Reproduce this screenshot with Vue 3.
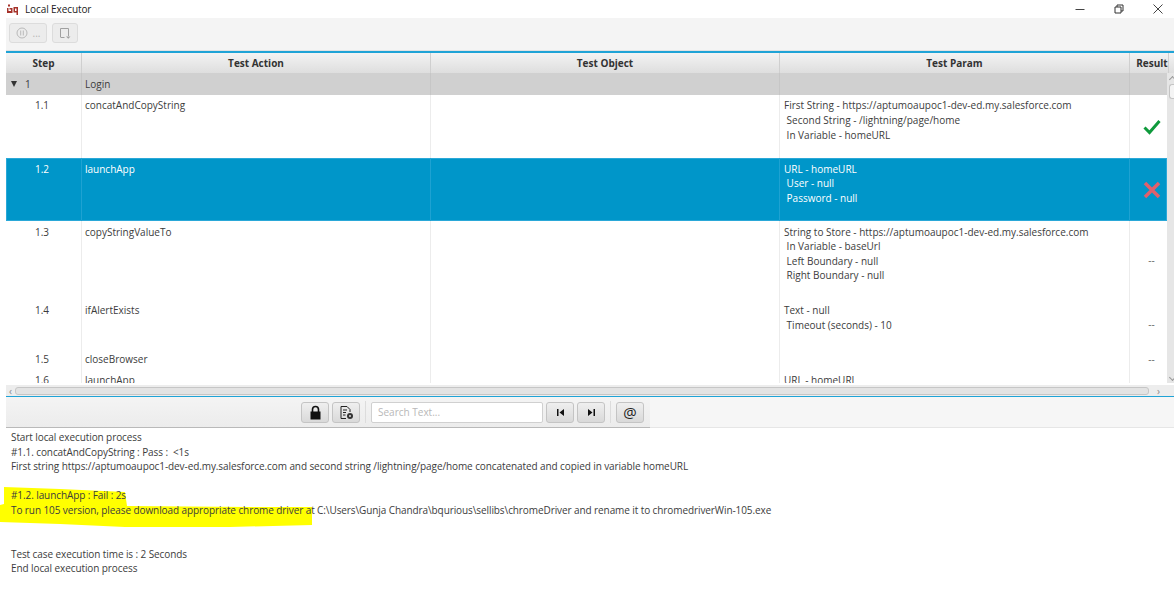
<script setup>
const rows = [
  { step: '1.1', action: 'concatAndCopyString', params: ['First String - https://aptumoaupoc1-dev-ed.my.salesforce.com', ' Second String - /lightning/page/home', ' In Variable - homeURL'], result: 'pass', height: 63 },
  { step: '1.2', action: 'launchApp', params: ['URL - homeURL', ' User - null', ' Password - null'], result: 'fail', height: 63, selected: true, low: true },
  { step: '1.3', action: 'copyStringValueTo', params: ['String to Store - https://aptumoaupoc1-dev-ed.my.salesforce.com', ' In Variable - baseUrl', ' Left Boundary - null', ' Right Boundary - null'], result: '--', height: 79, low: true },
  { step: '1.4', action: 'ifAlertExists', params: ['Text - null', ' Timeout (seconds) - 10'], result: '--', height: 49 },
  { step: '1.5', action: 'closeBrowser', params: [], result: '--', height: 21 },
  { step: '1.6', action: 'launchApp', params: ['URL - homeURL'], result: '', height: 24 }
];

const logLines = [
  'Start local execution process',
  '#1.1. concatAndCopyString : Pass :  <1s',
  'First string https://aptumoaupoc1-dev-ed.my.salesforce.com and second string /lightning/page/home concatenated and copied in variable homeURL',
  '',
  '#1.2. launchApp : Fail : 2s',
  'To run 105 version, please download appropriate chrome driver at C:\\Users\\Gunja Chandra\\bqurious\\sellibs\\chromeDriver and rename it to chromedriverWin-105.exe',
  '',
  '',
  'Test case execution time is : 2 Seconds',
  'End local execution process'
];
</script>

<template>
  <div class="window">
    <header class="titlebar">
      <div class="title-left">
        <svg class="logo" width="12" height="13" viewBox="0 0 12 13">
          <path d="M1 1.500h2v2H1zM0 5h1.500v3H4V6.500H2.500V5h3v5H0zM6.500 4H11v8H9.500V5.500H8V8h1.500v1.500h-3z" fill="#a5322a" />
        </svg>
        <span>Local Executor</span>
      </div>
      <div class="win-controls">
        <svg width="12" height="12" viewBox="0 0 12 12"><path d="M1.500 6.500h9" stroke="#444" fill="none" /></svg>
        <svg width="12" height="12" viewBox="0 0 12 12"><path d="M2 4h6v6H2zM4 4V2h6v6H8" stroke="#333" fill="none" /></svg>
        <svg width="12" height="12" viewBox="0 0 12 12"><path d="M1.500 1.500l9 9M10.500 1.500l-9 9" stroke="#444" fill="none" /></svg>
      </div>
    </header>

    <div class="toolbar">
      <button class="tool wide">
        <svg width="12" height="12" viewBox="0 0 12 12"><circle cx="6" cy="6" r="5" stroke="#b9b9b9" fill="none" /><path d="M4.700 3.500v5M7.300 3.500v5" stroke="#b9b9b9" fill="none" /></svg>
        <span>...</span>
      </button>
      <button class="tool">
        <svg width="14" height="14" viewBox="0 0 14 14"><path d="M2.500 11V2.500h8V10" stroke="#a0a0a0" fill="none" /><path d="M2.500 11.500h4" stroke="#a0a0a0" fill="none" /><path d="M8 10.500h4.500l-2.200 2.200z" fill="#a0a0a0" /></svg>
      </button>
    </div>

    <section class="table-wrap">
      <div class="row head">
        <div class="cell">Step</div>
        <div class="cell">Test Action</div>
        <div class="cell">Test Object</div>
        <div class="cell">Test Param</div>
        <div class="cell">Result</div>
      </div>
      <div class="table-body">
        <div class="table">
          <div class="row group">
            <div class="cell step-group"><span class="caret"></span>1</div>
            <div class="cell">Login</div>
            <div class="cell"></div>
            <div class="cell"></div>
            <div class="cell"></div>
          </div>
          <div
            v-for="row in rows"
            :key="row.step"
            :class="['row', 'item', { selected: row.selected, low: row.low }]"
            :style="{ height: row.height + 'px' }"
          >
            <div class="cell step">{{ row.step }}</div>
            <div class="cell">{{ row.action }}</div>
            <div class="cell"></div>
            <div class="cell params">
              <div v-for="p in row.params" :key="p">{{ p }}</div>
            </div>
            <div class="cell result">
              <svg v-if="row.result === 'pass'" width="18" height="16" viewBox="0 0 18 16"><path d="M1.500 8.500l5 5L16.500 2" stroke="#0f9a3c" stroke-width="3" fill="none" /></svg>
              <svg v-else-if="row.result === 'fail'" width="18" height="18" viewBox="0 0 18 18"><path d="M2 2l14 14M16 2L2 16" stroke="#e0606c" stroke-width="3.500" fill="none" /></svg>
              <span v-else>{{ row.result }}</span>
            </div>
          </div>
        </div>
        <div class="vscroll">
          <span class="arrow-up"></span>
          <span class="vthumb"></span>
          <span class="arrow-down"></span>
        </div>
      </div>
    </section>

    <div class="hscroll">
      <span class="chev">‹</span>
      <span class="hthumb"></span>
      <span class="chev">›</span>
    </div>

    <div class="search-bar">
      <div class="search-group">
        <button class="sbtn">
          <svg width="13" height="15" viewBox="0 0 13 15"><path d="M3.500 7V4.500a3 3 0 0 1 6 0V7" stroke="#111" stroke-width="1.600" fill="none" /><rect x="1.500" y="6.500" width="10" height="8" fill="#111" /></svg>
        </button>
        <button class="sbtn">
          <svg width="15" height="15" viewBox="0 0 15 15"><path d="M7 13.500H2V1.500h6l3 3V7" stroke="#222" fill="none" /><path d="M4 5h4M4 7.500h3M4 10h2.500" stroke="#222" fill="none" /><circle cx="11" cy="11" r="3" fill="#333" /><circle cx="11" cy="11" r="1" fill="#ddd" /></svg>
        </button>
        <span class="sep"></span>
        <input class="search" placeholder="Search Text..." />
        <button class="sbtn">
          <svg width="9" height="9" viewBox="0 0 9 9"><path d="M1 1h1.500v7H1zM8 1v7L3.500 4.500z" fill="#111" /></svg>
        </button>
        <button class="sbtn">
          <svg width="9" height="9" viewBox="0 0 9 9"><path d="M1 1v7l4.500-3.500zM6.500 1H8v7H6.500z" fill="#111" /></svg>
        </button>
        <span class="sep"></span>
        <button class="sbtn at">@</button>
      </div>
    </div>

    <section class="log">
      <svg class="marker" width="314" height="44" viewBox="0 0 314 44">
        <path d="M4 1L60 3L125 6L127 20L250 21L312 21L312 39L230 41L125 41L60 38L0 36L0 19L4 18z" fill="#ffff00" />
      </svg>
      <div v-for="(line, i) in logLines" :key="i" class="log-line">{{ line }}</div>
    </section>
  </div>
</template>

<style scoped>
.window {
  width: 1174px;
  height: 595px;
  background: #fff;
  overflow: hidden;
  font-family: "Open Sans", "Liberation Sans", sans-serif;
  font-size: 10px;
  color: #3c3c3c;
  display: flex;
  flex-direction: column;
}

.titlebar {
  height: 18px;
  flex: none;
  display: flex;
  justify-content: space-between;
  align-items: center;
  padding: 0 10px 0 7px;
  color: #222;
  letter-spacing: -0.1px;
}

.title-left {
  display: flex;
  align-items: center;
  gap: 6px;
}

.win-controls {
  display: flex;
  gap: 27px;
}

.toolbar {
  height: 33px;
  flex: none;
  margin-left: 6px;
  padding: 5px 0 0 3px;
  box-sizing: border-box;
  display: flex;
  gap: 5px;
  align-items: flex-start;
  background: #f4f4f4;
  border-bottom: 1px solid #e2e2e2;
}

.tool {
  width: 26px;
  height: 20px;
  padding: 0;
  display: flex;
  align-items: center;
  justify-content: center;
  gap: 5px;
  background: #ececec;
  border: 1px solid #dcdcdc;
  border-radius: 3px;
  color: #b5b5b5;
  font: inherit;
}

.tool.wide {
  width: 38px;
}

.table-wrap {
  height: 332px;
  flex: none;
  margin-left: 6px;
  border-top: 2px solid #1fa3d6;
  overflow: hidden;
}

.table-body {
  display: flex;
  height: 310px;
}

.table {
  width: 1161px;
  flex: none;
  overflow: hidden;
}

.row {
  display: grid;
  grid-template-columns: 76px 349px 349px 350px 39px;
}

.cell {
  padding: 3.4px 3px 0;
  line-height: 14.6px;
  border-right: 1px solid #ececec;
  white-space: pre;
  overflow: hidden;
}

.low .cell {
  padding-top: 3.7px;
}

.head {
  height: 20px;
  background: linear-gradient(#f3f3f3, #dedede);
  font-weight: 700;
  color: #333;
  text-align: center;
}

.head .cell {
  border-right: 1px solid #cfcfcf;
  padding-top: 3px;
}

.head .cell:last-child {
  padding-left: 6px;
  padding-right: 0;
}

.group {
  height: 22px;
  background: #d0d0d0;
}

.group .cell {
  padding-top: 4px;
  border-right-color: #c6c6c6;
}

.step-group {
  padding-left: 5px;
  display: flex;
  gap: 8px;
}

.caret {
  width: 0;
  height: 0;
  margin-top: 4px;
  border-left: 3.500px solid transparent;
  border-right: 3.500px solid transparent;
  border-top: 6px solid #333;
}

.step {
  text-align: center;
  padding-right: 6px;
}

.params {
  padding-left: 4px;
}

.item .result {
  display: flex;
  align-items: center;
  justify-content: center;
  padding: 0 0 0 5px;
  color: #666;
}

.selected {
  background: #0096c9;
  color: #fff;
  box-shadow: inset 0 0 0 1px #2aa8d8;
}

.selected .cell {
  border-right-color: #1ea2d2;
}

.vscroll {
  width: 7px;
  flex: none;
  background: #e6e6e6;
  position: relative;
}

.vthumb {
  position: absolute;
  top: 11px;
  left: 2px;
  right: 0;
  height: 13px;
  background: #f4f4f4;
  border: 1px solid #c4c4c4;
  border-right: 0;
  border-radius: 3px 0 0 3px;
}

.arrow-up,
.arrow-down {
  position: absolute;
  left: 3px;
  width: 4px;
  height: 4px;
  border-top: 1px solid #999;
  border-left: 1px solid #999;
}

.arrow-up {
  top: 4px;
  transform: rotate(45deg);
}

.arrow-down {
  bottom: 3px;
  transform: rotate(225deg);
}

.hscroll {
  height: 11px;
  flex: none;
  margin-left: 6px;
  padding-right: 5px;
  display: flex;
  align-items: center;
  background: #ededed;
  border-bottom: 1px solid #1fa3d6;
  color: #888;
  line-height: 10px;
}

.hthumb {
  flex: none;
  width: 1134px;
  height: 8px;
  margin-right: 5px;
  background: #e3e3e3;
  border: 1px solid #c6c6c6;
  border-radius: 3px;
  box-sizing: border-box;
}

.chev {
  width: 9px;
  text-align: center;
}

.search-bar {
  height: 30px;
  flex: none;
  margin-left: 6px;
  display: flex;
  background: #f6f6f6;
  border-bottom: 1px solid #e6e6e6;
}

.search-group {
  width: 644px;
  flex: none;
  display: flex;
  justify-content: flex-end;
  align-items: center;
  gap: 3px;
  height: 31px;
  padding-right: 6px;
  box-sizing: border-box;
  background: linear-gradient(#f4f4f4, #ececec);
  border-bottom: 1px solid #b9b9b9;
}

.sbtn {
  width: 28px;
  height: 21px;
  padding: 0;
  display: flex;
  align-items: center;
  justify-content: center;
  background: linear-gradient(#efefef, #d9d9d9);
  border: 1px solid #c4c4c4;
  border-radius: 3px;
  font-family: inherit;
}

.at {
  font-size: 15px;
  color: #222;
}

.sep {
  width: 1px;
  height: 22px;
  margin: 0 2px;
  background: #dcdcdc;
}

.search {
  width: 172px;
  height: 21px;
  padding: 0 6px;
  box-sizing: border-box;
  border: 1px solid #d0d0d0;
  border-radius: 2px;
  background: #fff;
  font: inherit;
}

.search::placeholder {
  color: #b8b8b8;
}

.log {
  flex: 1;
  position: relative;
  padding: 2px 0 0 11px;
  letter-spacing: -0.09px;
}

.marker {
  position: absolute;
  left: 0;
  top: 58px;
}

.log-line {
  position: relative;
  height: 14.6px;
  line-height: 14.6px;
  white-space: pre;
}
</style>

<style>
body {
  margin: 0;
}
</style>
